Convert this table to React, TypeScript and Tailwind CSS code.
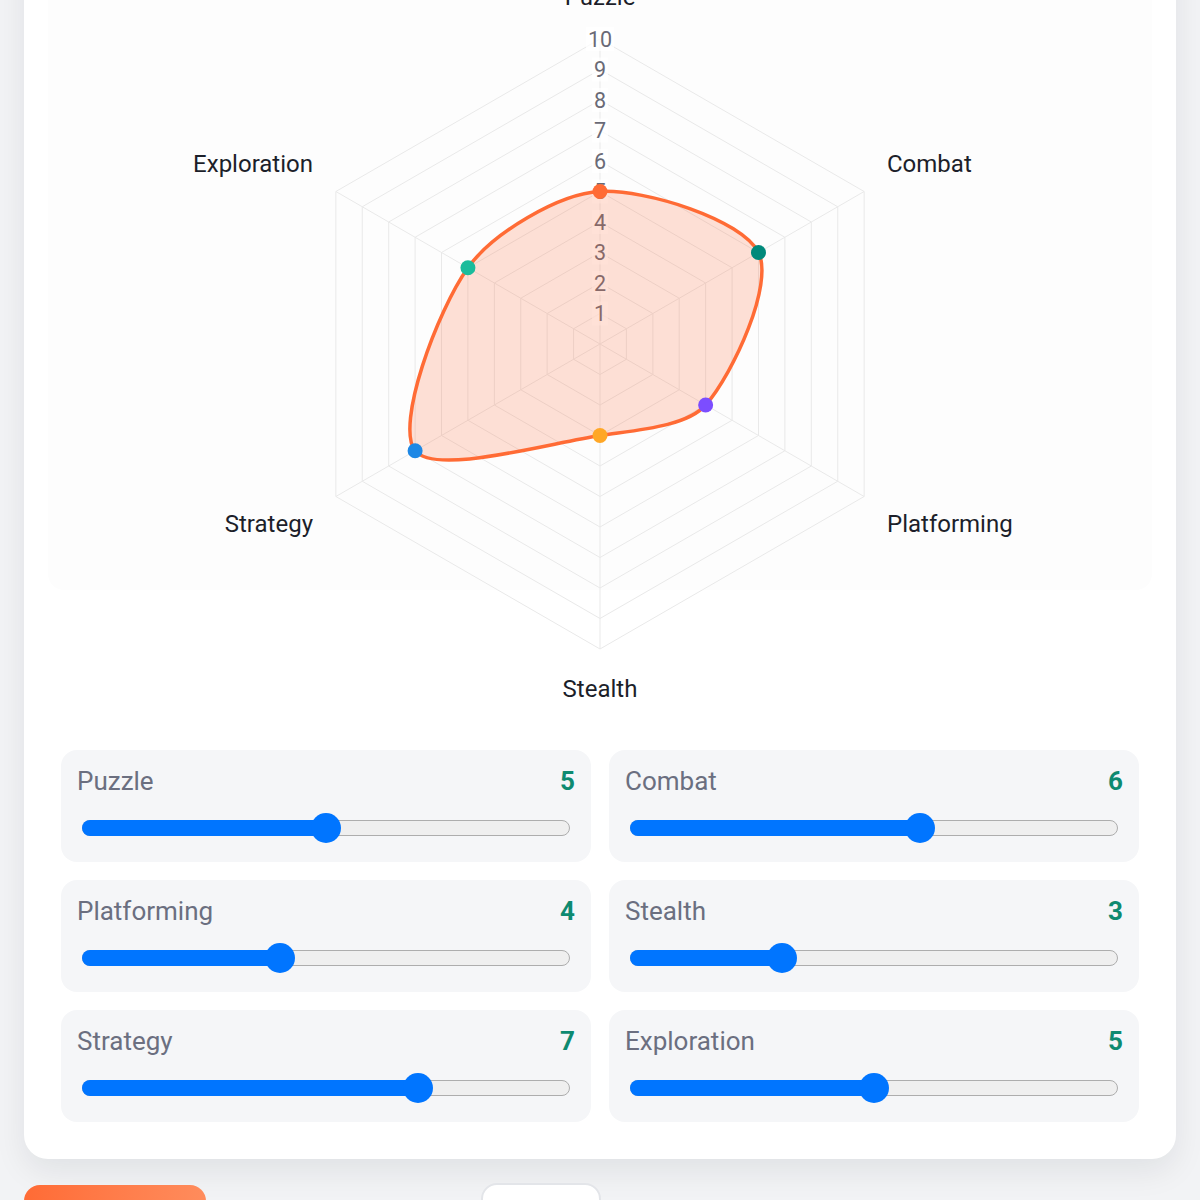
import React from 'react';

type Stat = { name: string; value: number; color: string };

const stats: Stat[] = [
  { name: 'Puzzle', value: 5, color: '#ff6b35' },
  { name: 'Combat', value: 6, color: '#00897b' },
  { name: 'Platforming', value: 4, color: '#7c4dff' },
  { name: 'Stealth', value: 3, color: '#ffa726' },
  { name: 'Strategy', value: 7, color: '#1e88e5' },
  { name: 'Exploration', value: 5, color: '#1abc9c' },
];

// chart geometry (svg coords)
const W = 1104;
const H = 780;
const CX = 552;
const CY = 404;
const STEP = 30.5;
const MAX = 10;

const labelPos = [
  { x: 552, y: 57, anchor: 'middle' },
  { x: 839, y: 224, anchor: 'start' },
  { x: 839, y: 584, anchor: 'start' },
  { x: 552, y: 749, anchor: 'middle' },
  { x: 265, y: 584, anchor: 'end' },
  { x: 265, y: 224, anchor: 'end' },
];

function pt(i: number, r: number) {
  const a = ((-90 + 60 * i) * Math.PI) / 180;
  return { x: CX + r * Math.cos(a), y: CY + r * Math.sin(a) };
}

function hexagon(r: number) {
  return [0, 1, 2, 3, 4, 5].map((i) => {
    const p = pt(i, r);
    return `${p.x},${p.y}`;
  }).join(' ');
}

// closed spline, same maths as chart.js tension curves
function splinePath(points: { x: number; y: number }[], t: number) {
  const n = points.length;
  const cps = points.map((cur, i) => {
    const prev = points[(i - 1 + n) % n];
    const next = points[(i + 1) % n];
    const d01 = Math.hypot(cur.x - prev.x, cur.y - prev.y);
    const d12 = Math.hypot(next.x - cur.x, next.y - cur.y);
    const fa = (t * d01) / (d01 + d12);
    const fb = (t * d12) / (d01 + d12);
    return {
      prev: { x: cur.x - fa * (next.x - prev.x), y: cur.y - fa * (next.y - prev.y) },
      next: { x: cur.x + fb * (next.x - prev.x), y: cur.y + fb * (next.y - prev.y) },
    };
  });
  let d = `M${points[0].x},${points[0].y}`;
  for (let i = 0; i < n; i++) {
    const j = (i + 1) % n;
    d += ` C${cps[i].next.x},${cps[i].next.y} ${cps[j].prev.x},${cps[j].prev.y} ${points[j].x},${points[j].y}`;
  }
  return d + ' Z';
}

function RadarChart() {
  const points = stats.map((s, i) => pt(i, s.value * STEP));
  const outer = MAX * STEP;

  return (
    <svg width={W} height={H} viewBox={`0 0 ${W} ${H}`} className="block">
      <rect x="0" y="0" width={W} height="650" rx="16" fill="#fdfdfd" />

      {Array.from({ length: MAX }, (_, k) => (
        <polygon key={k} points={hexagon((k + 1) * STEP)} fill="none" stroke="#e9e9e9" strokeWidth="1" />
      ))}
      {stats.map((_, i) => {
        const p = pt(i, outer);
        return <line key={i} x1={CX} y1={CY} x2={p.x} y2={p.y} stroke="#e9e9e9" strokeWidth="1" />;
      })}

      {Array.from({ length: MAX }, (_, k) => {
        const v = k + 1;
        const y = CY - v * STEP;
        const w = String(v).length * 12 + 4;
        return (
          <g key={v}>
            <rect x={CX - w / 2} y={y - 12} width={w} height="24" fill="rgba(255,255,255,0.75)" />
            <text x={CX} y={y} textAnchor="middle" dominantBaseline="central" fontSize="21.5" fill="#6a6a76">
              {v}
            </text>
          </g>
        );
      })}

      <path d={splinePath(points, 0.3)} fill="rgba(255,107,53,0.2)" stroke="#ff6b35" strokeWidth="3.5" />

      {points.map((p, i) => (
        <circle key={i} cx={p.x} cy={p.y} r="7.5" fill={stats[i].color} />
      ))}

      {stats.map((s, i) => (
        <text
          key={s.name}
          x={labelPos[i].x}
          y={labelPos[i].y}
          textAnchor={labelPos[i].anchor as 'start' | 'middle' | 'end'}
          dominantBaseline="central"
          fontSize="24"
          fill="#1c1f2a"
        >
          {s.name}
        </text>
      ))}
    </svg>
  );
}

function StatSlider({ name, value }: Stat) {
  const pct = value / MAX;
  return (
    <div className="rounded-2xl bg-[#f5f6f8] px-4 pt-4 pb-[19px]">
      <div className="flex h-[30px] items-center justify-between">
        <span className="text-[26px] text-[#6b6f80]">{name}</span>
        <span className="text-[26px] font-bold text-[#0e8a70]">{value}</span>
      </div>
      <div className="relative mx-[5px] mt-[17px] h-[30px]" role="slider" aria-valuenow={value} aria-valuemin={0} aria-valuemax={MAX}>
        <div className="absolute inset-x-0 top-[7px] h-4 rounded-full border border-[#adadad] bg-[#efefef]" />
        <div
          className="absolute left-0 top-[7px] h-4 rounded-full bg-[#0075ff]"
          style={{ width: `calc(15px + ${pct} * (100% - 30px))` }}
        />
        <div
          className="absolute top-0 h-[30px] w-[30px] rounded-full bg-[#0075ff]"
          style={{ left: `calc(${pct} * (100% - 30px))` }}
        />
      </div>
    </div>
  );
}

export default function App() {
  return (
    <div className="min-h-screen overflow-hidden bg-[#f2f3f5] font-['Roboto',sans-serif]">
      <div className="mx-auto -mt-[84px] max-w-6xl">
        <div className="rounded-3xl bg-white p-6 shadow-[0_12px_32px_rgba(15,23,42,0.08)]">
          <RadarChart />
          <div className="mt-[17px] grid grid-cols-2 gap-[18px] p-[13px]">
            {stats.map((s) => (
              <StatSlider key={s.name} {...s} />
            ))}
          </div>
        </div>

        <div className="mt-[26px] flex items-start gap-[275px] pb-6">
          <button className="h-14 w-[182px] rounded-2xl bg-linear-to-r from-[#ff6b35] to-[#ff8c5c] text-lg font-semibold text-white">
            Save Profile
          </button>
          <button className="-mt-[2px] h-14 w-[120px] rounded-2xl border-2 border-[#e3e5e9] bg-white text-lg text-[#374151]">
            Reset
          </button>
        </div>
      </div>
    </div>
  );
}
